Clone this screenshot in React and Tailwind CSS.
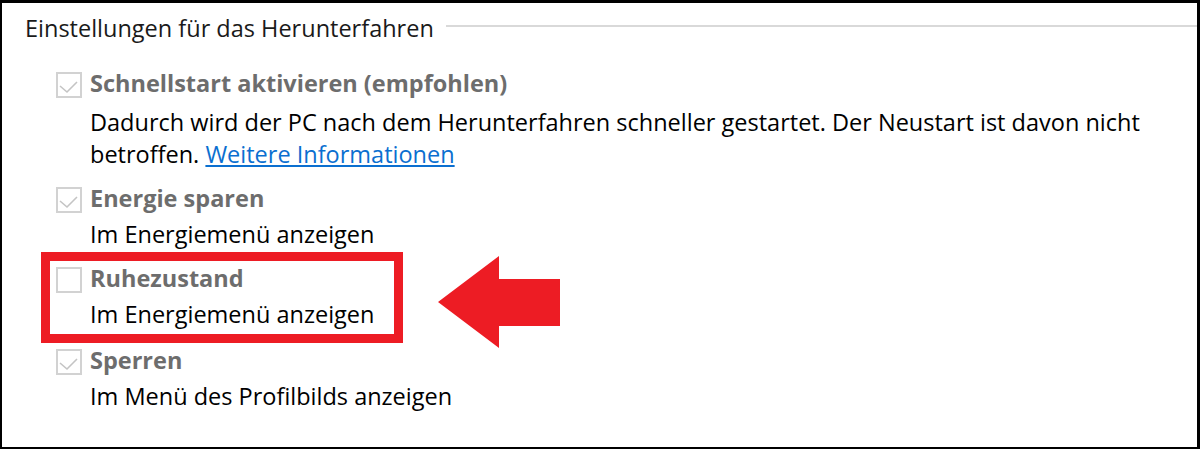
import React from "react";

const Check = ({ checked }) => (
  <div className="w-[26px] h-[26px] shrink-0 border-2 border-[#d2d2d2] bg-white">
    {checked && (
      <svg width="22" height="22" viewBox="0 0 22 22" className="block">
        <path d="M2 12 L9 18 L19 8" fill="none" stroke="#c4c4c4" strokeWidth="1.6" />
      </svg>
    )}
  </div>
);

const Option = ({ checked, label, children, className = "", descGap = "mt-[5px]" }) => (
  <div className={`flex items-start gap-[8px] ${className}`}>
    <Check checked={checked} />
    <div className="flex flex-col">
      <div className="h-[26px] leading-[22px] font-bold text-[#6d6d6d] whitespace-nowrap">{label}</div>
      <div className={`${descGap} leading-[32px] text-black`}>{children}</div>
    </div>
  </div>
);

export default function App() {
  return (
    <div
      className="w-[1200px] h-[449px] bg-white border-black border-t-[3px] border-l-2 border-r-[3px] border-b-2 overflow-hidden text-[23.5px]"
      style={{ fontFamily: '"Open Sans", "Noto Sans", sans-serif' }}
    >
      {/* Section header */}
      <div className="flex items-start mt-[11px] pl-[23px]">
        <span className="leading-[28px] text-[#1a1a1a] whitespace-nowrap">Einstellungen für das Herunterfahren</span>
        <div className="flex-1 h-[2px] bg-[#d9d9d9] mt-[11px] ml-[12px]" />
      </div>

      <div className="flex flex-col pl-[54px] mt-[30px]">
        <Option checked label="Schnellstart aktivieren (empfohlen)" descGap="mt-[8px]">
          <p className="w-[1080px]">
            Dadurch wird der PC nach dem Herunterfahren schneller gestartet. Der Neustart ist davon nicht betroffen.{" "}
            <a href="#" className="text-[#0b6fd0] underline underline-offset-2">Weitere Informationen</a>
          </p>
        </Option>

        <Option checked label="Energie sparen" className="mt-[17px]">
          Im Energiemenü anzeigen
        </Option>

        {/* Highlighted option */}
        <div className="relative mt-[2px] -ml-[15px] w-[362px] border-[9px] border-[#ed1c24] pl-[6px] pt-[6px] pb-[4px]">
          <Option checked={false} label="Ruhezustand">
            Im Energiemenü anzeigen
          </Option>
          <svg
            width="122"
            height="92"
            viewBox="0 0 122 92"
            className="absolute left-[388px] top-[-5px]"
          >
            <polygon points="0,46 61,0 61,23 122,23 122,70 61,70 61,92" fill="#ed1c24" />
          </svg>
        </div>

        <Option checked label="Sperren" className="mt-[6px]">
          Im Menü des Profilbilds anzeigen
        </Option>
      </div>
    </div>
  );
}
